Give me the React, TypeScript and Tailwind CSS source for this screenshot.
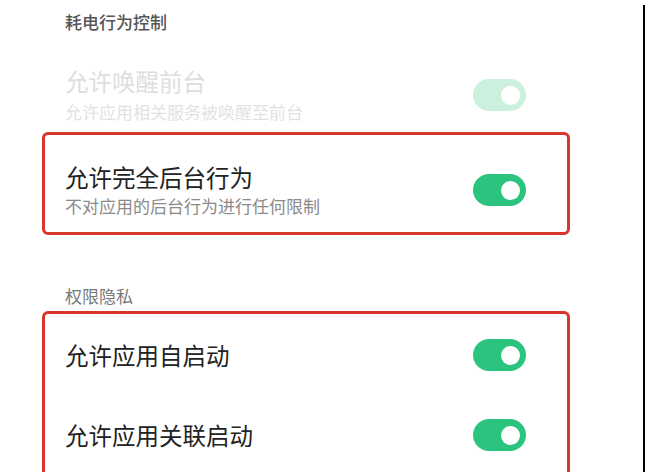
const font = { fontFamily: '"Noto Sans CJK SC", "Noto Sans", sans-serif' }

function Toggle({ faded = false }: { faded?: boolean }) {
  return (
    <div
      className={`flex h-[32px] w-[53px] shrink-0 items-center justify-end rounded-full pr-[6px] ${
        faded ? 'bg-[#cbf1de]' : 'bg-[#2bc47e]'
      }`}
    >
      <div className="h-[19px] w-[19px] rounded-full bg-white" />
    </div>
  )
}

export default function App() {
  return (
    <div className="flex h-[472px] w-[649px] overflow-hidden bg-white" style={font}>
      <div className="flex w-[643px] flex-col pt-[10px]">
        <div className="pl-[65px] text-[17px] font-medium leading-[24px] text-[#555555]">耗电行为控制</div>

        <div className="ml-[42px] mr-[73px] mt-[29px] flex items-center border-[3px] border-transparent pl-[20px] pr-[41px]">
          <div className="flex flex-1 flex-col gap-[4px]">
            <div className="text-[23.5px] leading-[30px] text-[#dedede]">允许唤醒前台</div>
            <div className="text-[17px] leading-[24px] text-[#e2e2e2]">允许应用相关服务被唤醒至前台</div>
          </div>
          <Toggle faded />
        </div>

        <div className="ml-[42px] mr-[73px] mt-[5px] flex items-center rounded-[6px] border-[3px] border-[#d8352c] pb-[14px] pl-[20px] pr-[41px] pt-[27px]">
          <div className="flex flex-1 flex-col gap-[2px]">
            <div className="text-[23.5px] leading-[30px] text-[#222222]">允许完全后台行为</div>
            <div className="text-[17px] leading-[24px] text-[#8a8a8a]">不对应用的后台行为进行任何限制</div>
          </div>
          <Toggle />
        </div>

        <div className="ml-[65px] mr-[113px] mt-[20px] h-px bg-[#efefef]" />

        <div className="mt-[29px] pl-[65px] text-[17px] leading-[24px] text-[#7a7a7a]">权限隐私</div>

        <div className="ml-[42px] mr-[73px] mt-[3px] flex flex-col rounded-t-[6px] border-x-[3px] border-t-[3px] border-[#d8352c] pl-[20px] pr-[41px] pt-px">
          <div className="flex h-[80px] items-center">
            <div className="flex-1 text-[23.5px] leading-[30px] text-[#222222]">允许应用自启动</div>
            <Toggle />
          </div>
          <div className="flex h-[80px] items-center">
            <div className="flex-1 text-[23.5px] leading-[30px] text-[#222222]">允许应用关联启动</div>
            <Toggle />
          </div>
        </div>
      </div>
      <div className="mt-[5px] w-[2px] bg-black" />
    </div>
  )
}
